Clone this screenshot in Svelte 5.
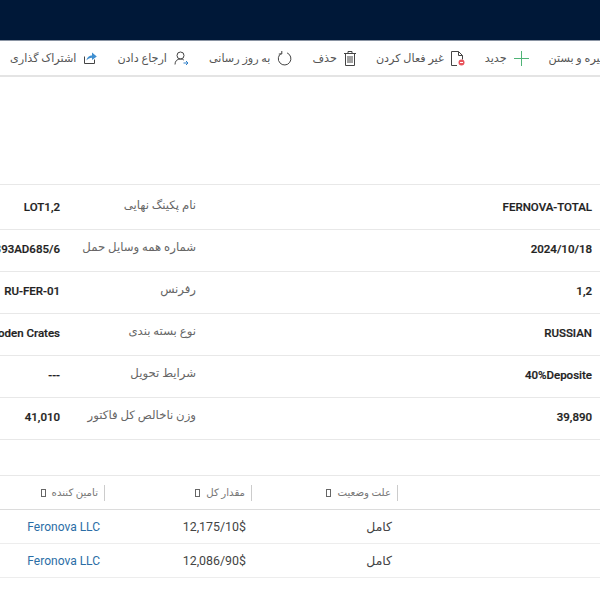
<script>
  const tools = [
    { key: 'share', label: 'اشتراک گذاری' },
    { key: 'assign', label: 'ارجاع دادن' },
    { key: 'refresh', label: 'به روز رسانی' },
    { key: 'trash', label: 'حذف' },
    { key: 'off', label: 'غیر فعال کردن' },
    { key: 'plus', label: 'جدید' },
    { key: 'save', label: 'ذخیره و بستن' }
  ];

  const rows = [
    { first: 'FERNOVA-TOTAL', label: 'نام پکینگ نهایی', second: 'LOT1,2' },
    { first: '2024/10/18', label: 'شماره همه وسایل حمل', second: '1393AD685/6' },
    { first: '1,2', label: 'رفرنس', second: 'RU-FER-01' },
    { first: 'RUSSIAN', label: 'نوع بسته بندی', second: 'Wooden Crates' },
    { first: '40%Deposite', label: 'شرایط تحویل', second: '---' },
    { first: '39,890', label: 'وزن ناخالص کل فاکتور', second: '41,010' }
  ];

  const columns = ['علت وضعیت', 'مقدار کل', 'تامین کننده'];

  const lines = [
    { reason: 'کامل', total: '12,175/10$', vendor: 'Feronova LLC' },
    { reason: 'کامل', total: '12,086/90$', vendor: 'Feronova LLC' }
  ];
</script>

<div class="page">
  <header class="topbar"></header>

  <nav class="toolbar">
    {#each tools as tool}
      <div class="tool">
        {#if tool.key === 'share'}
          <svg width="14" height="14" viewBox="0 0 14 14" fill="none">
            <path d="M1.5 5.5v7h10V8.5" stroke="#444" />
            <path d="M3.5 9.5C4 6 6.5 4.5 9 4.5V1.5l4.8 3.9L9 9V6.8C6.8 6.8 5 7.6 3.5 9.5z" fill="#3f8fd0" />
          </svg>
        {:else if tool.key === 'assign'}
          <svg width="15" height="15" viewBox="0 0 15 15" fill="none">
            <circle cx="6.5" cy="4.5" r="3.5" stroke="#444" />
            <path d="M1 13.5c0-3.4 2-5.5 5.5-5.5 1.4 0 2.5.4 3.3 1" stroke="#444" />
            <path d="M9.5 12h4.5M12 10l2 2-2 2" stroke="#2f7fc8" />
          </svg>
        {:else if tool.key === 'refresh'}
          <svg width="15" height="15" viewBox="0 0 15 15" fill="none">
            <path d="M4.5 2.2a6.3 6.3 0 1 0 5.6-.3" stroke="#444" />
            <path d="M4.8 0v3h-3" stroke="#444" />
          </svg>
        {:else if tool.key === 'trash'}
          <svg width="12" height="15" viewBox="0 0 12 15" fill="none">
            <path d="M0 2.5h12M4 2.5V.5h4v2M1.5 2.5v12h9v-12M4 5v7M6 5v7M8 5v7" stroke="#444" />
          </svg>
        {:else if tool.key === 'off'}
          <svg width="14" height="15" viewBox="0 0 14 15" fill="none">
            <path d="M6 14.5H.5V.5h7l4 4v4M7.5.5v4h4" stroke="#444" />
            <circle cx="10.5" cy="11.5" r="3" fill="#e8545c" />
            <path d="M9 11.5h3" stroke="#fff" />
          </svg>
        {:else if tool.key === 'plus'}
          <svg width="15" height="15" viewBox="0 0 15 15" fill="none">
            <path d="M7.5 0v15M0 7.5h15" stroke="#4fb477" />
          </svg>
        {/if}
        <span>{tool.label}</span>
      </div>
    {/each}
  </nav>

  <section class="details">
    {#each rows as row}
      <div class="row">
        <div class="value"><span dir="ltr">{row.first}</span></div>
        <div class="label">{row.label}</div>
        <div class="value"><span dir="ltr">{row.second}</span></div>
      </div>
    {/each}
  </section>

  <section class="grid">
    <div class="grid-row head">
      <div class="blank"></div>
      {#each columns as col}
        <div class="th">
          <span>{col}</span>
          <i class="tofu"></i>
        </div>
      {/each}
    </div>
    {#each lines as line}
      <div class="grid-row">
        <div class="blank"></div>
        <div class="td">{line.reason}</div>
        <div class="td"><span dir="ltr">{line.total}</span></div>
        <div class="td link"><span dir="ltr">{line.vendor}</span></div>
      </div>
    {/each}
  </section>
</div>

<style>
  :global(body) {
    margin: 0;
    background: #fff;
    overflow: hidden;
  }

  .page {
    width: 600px;
    height: 600px;
    overflow: hidden;
    font-family: Roboto, "DejaVu Sans", sans-serif;
    color: #333;
  }

  .topbar {
    height: 40px;
    background: #001838;
    border-bottom: 1px solid #8a94a3;
  }

  .toolbar {
    display: flex;
    align-items: center;
    gap: 20px;
    height: 34px;
    padding-left: 10px;
    border-bottom: 2px solid #e4e4e4;
    white-space: nowrap;
    font-size: 11.2px;
    color: #555;
  }

  .tool {
    display: flex;
    flex-direction: row-reverse;
    align-items: center;
    gap: 7px;
    flex: none;
  }

  .details {
    margin-top: 107px;
    border-top: 1px solid #e8e8e8;
    direction: rtl;
  }

  .row {
    display: grid;
    grid-template-columns: 404px 136px 60px;
    height: 38px;
    padding-bottom: 3px;
    align-items: center;
    border-bottom: 1px solid #e8e8e8;
    white-space: nowrap;
  }

  .row:first-child {
    height: 44px;
    padding-bottom: 0;
  }

  .value {
    padding-right: 8px;
    font-size: 11.5px;
    font-weight: 500;
    color: #222;
    -webkit-text-stroke: 0.2px #222;
  }

  .value + .label + .value {
    padding-right: 0;
  }

  .label {
    padding-bottom: 4px;
    font-size: 11.7px;
    color: #666;
  }

  .grid {
    margin-top: 35px;
    border-top: 1px solid #e8e8e8;
    direction: rtl;
  }

  .grid-row {
    display: grid;
    grid-template-columns: 202px 146px 147px 105px;
    height: 33px;
    align-items: center;
    border-bottom: 1px solid #ededed;
    white-space: nowrap;
  }

  .grid-row.head {
    border-bottom-color: #dcdcdc;
  }

  .th {
    display: flex;
    align-items: center;
    gap: 6px;
    height: 16px;
    padding-right: 6px;
    border-right: 1px solid #ccc;
    font-size: 10.2px;
    color: #777;
  }

  .tofu {
    width: 3px;
    height: 6px;
    border: 1px solid #666;
  }

  .td {
    padding-right: 6px;
    font-size: 12.4px;
    color: #444;
  }

  .td.link {
    padding-right: 5px;
    font-size: 12px;
    color: #2b6ea6;
  }
</style>
